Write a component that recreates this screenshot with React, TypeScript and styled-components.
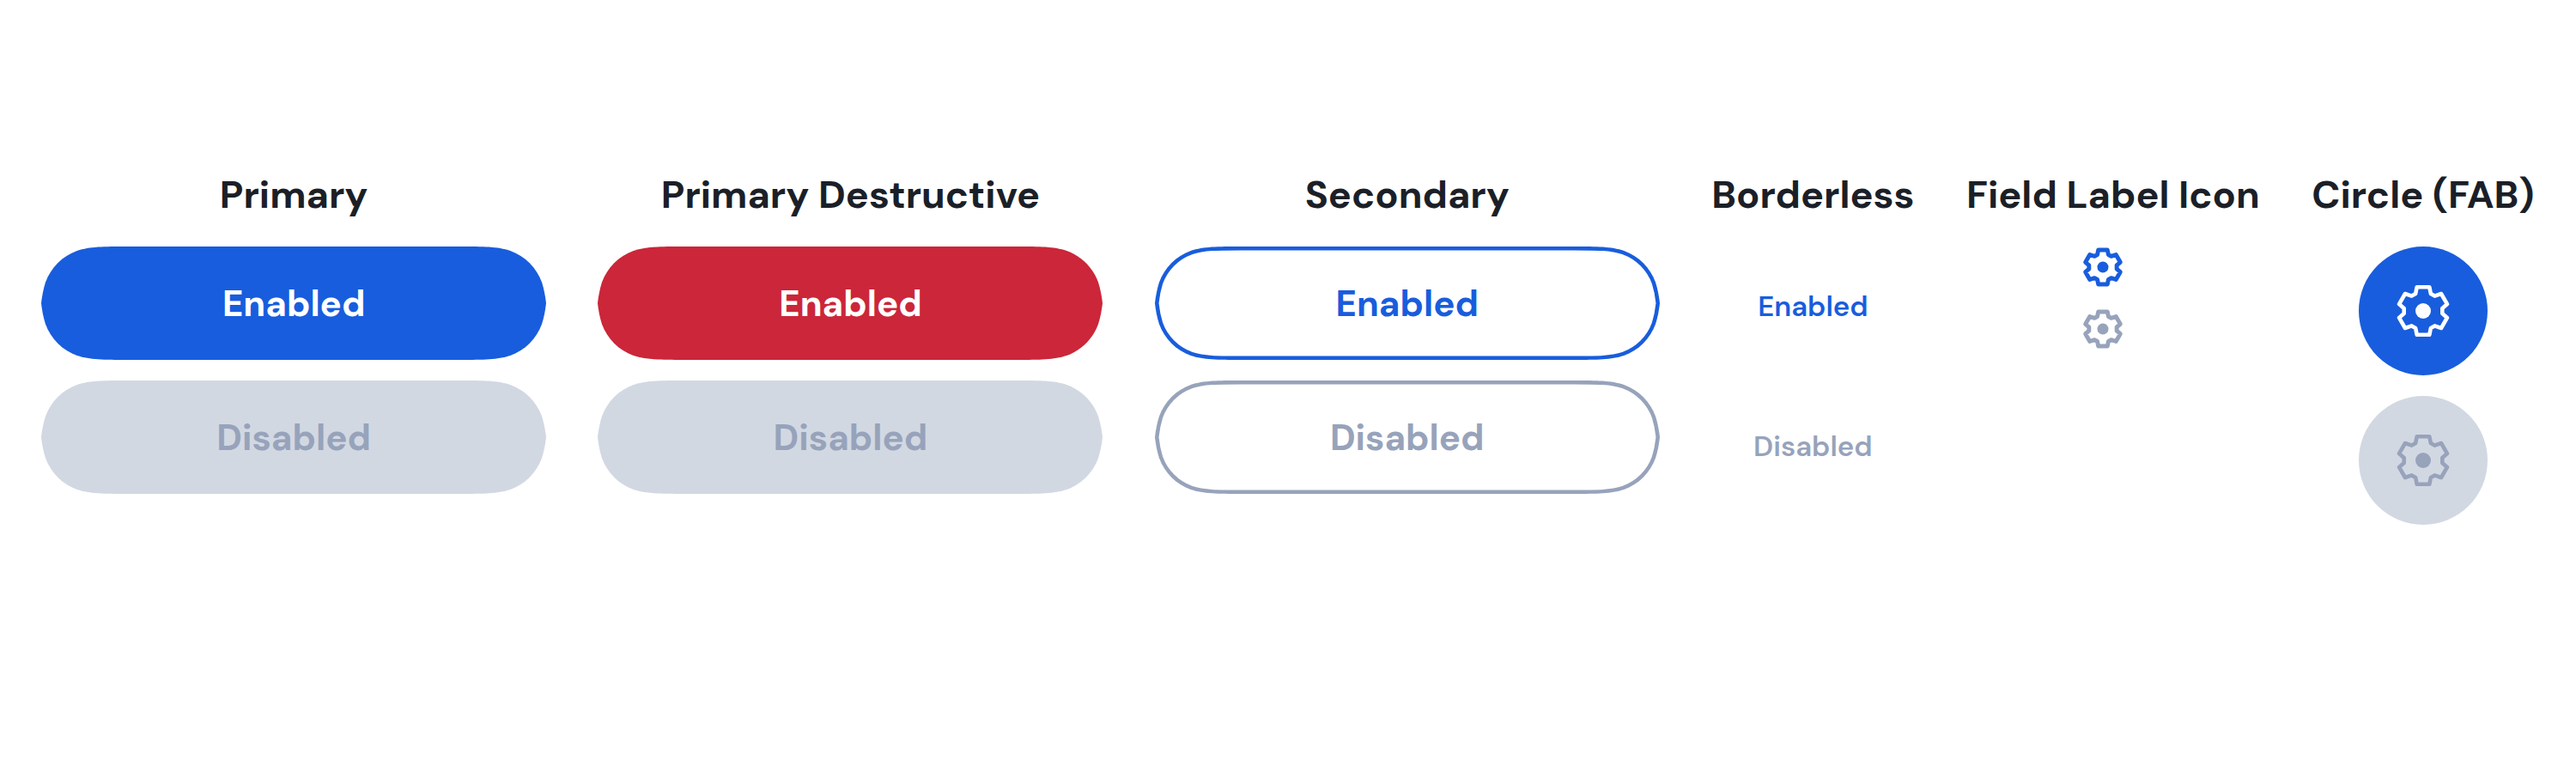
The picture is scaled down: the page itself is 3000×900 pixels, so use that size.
import React, { useId } from "react";
import styled, { createGlobalStyle } from "styled-components";

const colors = {
  ink: "#1b1f28",
  blue: "#185ddd",
  red: "#cb2639",
  grey: "#d2d8e2",
  muted: "#97a3bb",
  white: "#ffffff",
};

const GlobalStyle = createGlobalStyle`
  *, *::before, *::after { box-sizing: border-box; }
  body {
    margin: 0;
    background: ${colors.white};
    font-family: "DM Sans", Inter, sans-serif;
  }
`;

const Page = styled.main`
  display: flex;
  align-items: flex-start;
  gap: 60px;
  width: 3000px;
  height: 900px;
  padding: 196px 48px 0;
  overflow: hidden;
`;

const Column = styled.section<{ $width: number }>`
  display: flex;
  flex: none;
  flex-direction: column;
  align-items: center;
  width: ${(p) => p.$width}px;
`;

const Heading = styled.h2`
  margin: 0 0 30px;
  color: ${colors.ink};
  font-size: 45px;
  font-weight: 700;
  line-height: 61px;
  white-space: nowrap;
`;

const Stack = styled.div<{ $shiftEnd?: number }>`
  display: flex;
  flex-direction: column;
  align-items: center;
  gap: 24px;
  padding-right: ${(p) => p.$shiftEnd ?? 0}px;
`;

const ButtonBase = styled.button`
  display: flex;
  align-items: center;
  justify-content: center;
  margin: 0;
  padding: 0;
  border: 0;
  background: none;
  font-family: inherit;
`;

const PillButton = styled(ButtonBase)`
  position: relative;
  width: 588px;
  height: 132px;
`;

const PillShape = styled.svg`
  position: absolute;
  inset: 0;
  width: 100%;
  height: 100%;
  overflow: visible;
`;

const PillLabel = styled.span<{ $color: string }>`
  position: relative;
  padding-top: 1px;
  color: ${(p) => p.$color};
  font-size: 42px;
  font-weight: 700;
  line-height: 55px;
`;

const TextButton = styled(ButtonBase)<{ $color: string }>`
  height: 139px;
  padding: 0 36px;
  color: ${(p) => p.$color};
  font-size: 33px;
  font-weight: 600;
  line-height: 43px;
`;

const IconButton = styled(ButtonBase)`
  width: 48px;
  height: 48px;
`;

const CircleButton = styled(ButtonBase)<{ $fill: string }>`
  width: 150px;
  height: 150px;
  border-radius: 50%;
  background: ${(p) => p.$fill};
`;

const GearSvg = styled.svg<{ $size: number; $color: string }>`
  display: block;
  width: ${(p) => p.$size}px;
  height: ${(p) => p.$size}px;
  color: ${(p) => p.$color};
`;

/* Capsule with continuous (superelliptic) corners. */
function capsulePath(w: number, h: number) {
  const r = h / 2;
  const a = 1.52866 * r;
  const b = 1.08849 * r;
  const c = 0.86841 * r;
  const d = 0.63149 * r;
  const e = 0.37282 * r;
  const f = 0.16906 * r;
  const g = 0.07491 * r;
  const m = 0.037 * r;
  const n = 0.013 * r;
  const p = 0.75 * r;
  const q = 0.88 * r;
  return [
    `M${a} 0 L${w - a} 0`,
    `C${w - b} 0 ${w - c} 0 ${w - d} ${g}`,
    `C${w - e} ${f} ${w - f} ${e} ${w - g} ${d}`,
    `C${w - m} ${p} ${w - n} ${q} ${w} ${r}`,
    `C${w - n} ${h - q} ${w - m} ${h - p} ${w - g} ${h - d}`,
    `C${w - f} ${h - e} ${w - e} ${h - f} ${w - d} ${h - g}`,
    `C${w - c} ${h} ${w - b} ${h} ${w - a} ${h}`,
    `L${a} ${h}`,
    `C${b} ${h} ${c} ${h} ${d} ${h - g}`,
    `C${e} ${h - f} ${f} ${h - e} ${g} ${h - d}`,
    `C${m} ${h - p} ${n} ${h - q} 0 ${r}`,
    `C${n} ${q} ${m} ${p} ${g} ${d}`,
    `C${f} ${e} ${e} ${f} ${d} ${g}`,
    `C${c} 0 ${b} 0 ${a} 0Z`,
  ].join(" ");
}

const CAPSULE = capsulePath(588, 132);

type PillProps = {
  label: string;
  color: string;
  fill?: string;
  outline?: string;
  disabled?: boolean;
};

function Pill({ label, color, fill = "none", outline, disabled }: PillProps) {
  const clip = useId();
  return (
    <PillButton disabled={disabled}>
      <PillShape viewBox="0 0 588 132" aria-hidden>
        {outline ? (
          <>
            <clipPath id={clip}>
              <path d={CAPSULE} />
            </clipPath>
            <path d={CAPSULE} fill="none" stroke={outline} strokeWidth={9} clipPath={`url(#${clip})`} />
          </>
        ) : (
          <path d={CAPSULE} fill={fill} />
        )}
      </PillShape>
      <PillLabel $color={color}>{label}</PillLabel>
    </PillButton>
  );
}

const GEAR =
  "M-7.3 -27.7H7.3L8.9 -19.9L13.4 -17.4L21 -20L28 -7.9L22.3 -3V3L28 7.9L21 20L13.4 17.4L8.9 19.9L7.3 27.7H-7.3L-8.9 19.9L-13.4 17.4L-21 20L-28 7.9L-22.3 3V-3L-28 -7.9L-21 -20L-13.4 -17.4L-8.9 -19.9Z";

function Gear({ size, extent, weight, color }: { size: number; extent: number; weight: number; color: string }) {
  return (
    <GearSvg
      $size={size}
      $color={color}
      viewBox={`${-extent} ${-extent} ${extent * 2} ${extent * 2}`}
      aria-hidden
    >
      <path d={GEAR} fill="none" stroke="currentColor" strokeWidth={weight} strokeLinejoin="round" />
      <circle r={9} fill="currentColor" />
    </GearSvg>
  );
}

const FieldGear = ({ color }: { color: string }) => <Gear size={48} extent={33.1} weight={6.8} color={color} />;
const FabGear = ({ color }: { color: string }) => <Gear size={72} extent={36} weight={4.6} color={color} />;

export default function App() {
  return (
    <>
      <GlobalStyle />
      <Page>
        <Column $width={588.3}>
          <Heading>Primary</Heading>
          <Stack>
            <Pill label="Enabled" color={colors.white} fill={colors.blue} />
            <Pill label="Disabled" color={colors.muted} fill={colors.grey} disabled />
          </Stack>
        </Column>
        <Column $width={588.3}>
          <Heading>Primary Destructive</Heading>
          <Stack>
            <Pill label="Enabled" color={colors.white} fill={colors.red} />
            <Pill label="Disabled" color={colors.muted} fill={colors.grey} disabled />
          </Stack>
        </Column>
        <Column $width={588.3}>
          <Heading>Secondary</Heading>
          <Stack>
            <Pill label="Enabled" color={colors.blue} outline={colors.blue} />
            <Pill label="Disabled" color={colors.muted} outline={colors.muted} disabled />
          </Stack>
        </Column>
        <Column $width={237}>
          <Heading>Borderless</Heading>
          <Stack>
            <TextButton $color={colors.blue}>Enabled</TextButton>
            <TextButton $color={colors.muted} disabled>
              Disabled
            </TextButton>
          </Stack>
        </Column>
        <Column $width={342}>
          <Heading>Field Label Icon</Heading>
          <Stack $shiftEnd={24}>
            <IconButton aria-label="Settings">
              <FieldGear color={colors.blue} />
            </IconButton>
            <IconButton aria-label="Settings" disabled>
              <FieldGear color={colors.muted} />
            </IconButton>
          </Stack>
        </Column>
        <Column $width={260}>
          <Heading>Circle (FAB)</Heading>
          <Stack>
            <CircleButton $fill={colors.blue} aria-label="Settings">
              <FabGear color={colors.white} />
            </CircleButton>
            <CircleButton $fill={colors.grey} aria-label="Settings" disabled>
              <FabGear color={colors.muted} />
            </CircleButton>
          </Stack>
        </Column>
      </Page>
    </>
  );
}
